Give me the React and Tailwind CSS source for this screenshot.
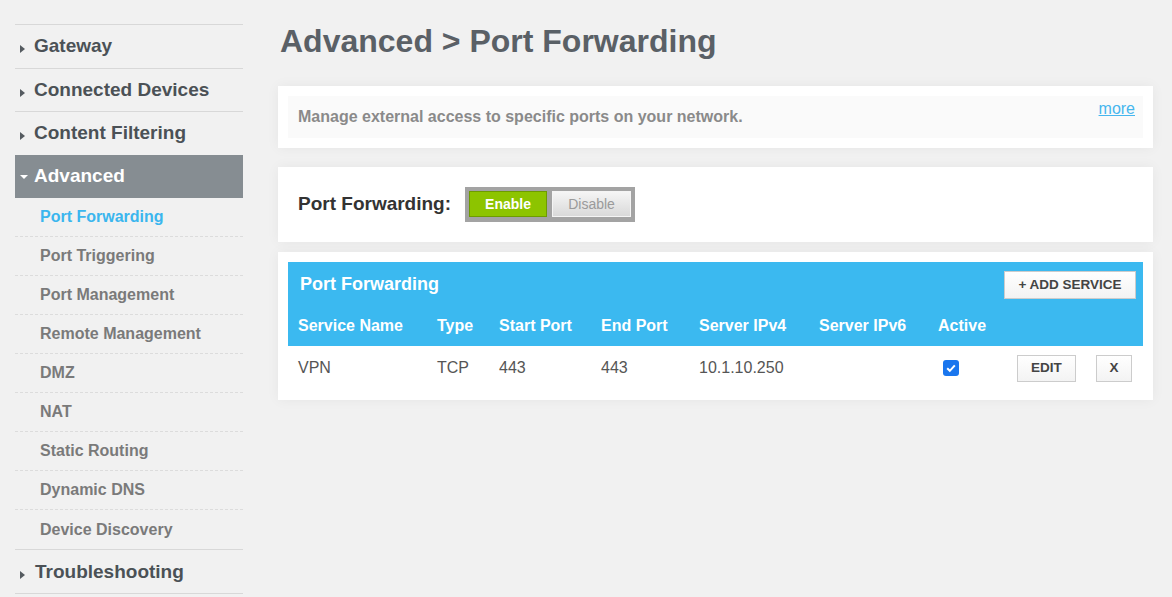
import React from "react";

const font = { fontFamily: '"Liberation Sans", Arial, sans-serif' };

function RightTri() {
  return <span className="w-0 h-0 border-y-[4px] border-y-transparent border-l-[5px] border-l-[#555b60] mt-[6px]" />;
}
function DownTri() {
  return <span className="w-0 h-0 border-x-[4px] border-x-transparent border-t-[4px] border-t-white mt-[2px]" />;
}

const topItems = ["Gateway", "Connected Devices", "Content Filtering"];
const subItems = [
  "Port Forwarding",
  "Port Triggering",
  "Port Management",
  "Remote Management",
  "DMZ",
  "NAT",
  "Static Routing",
  "Dynamic DNS",
  "Device Discovery",
];

function Sidebar() {
  return (
    <div className="w-[228px] shrink-0 mt-[24px] ml-[15px]">
      {topItems.map((t) => (
        <div key={t} className="h-[43.5px] border-t border-[#d8d8d8] flex items-center pl-[5px] gap-[9px]">
          <RightTri />
          <span className="text-[19px] font-bold text-[#4b5156]">{t}</span>
        </div>
      ))}
      <div className="h-[43px] bg-[#868d92] flex items-center pl-[5px] gap-[6px]">
        <DownTri />
        <span className="text-[19px] font-bold text-white">Advanced</span>
      </div>
      {subItems.map((s, i) => (
        <div
          key={s}
          className={
            "h-[39.1px] flex items-center pl-[25px] " +
            (i < subItems.length - 1 ? "border-b border-dashed border-[#dcdcdc]" : "")
          }
        >
          <span className={"text-[16px] font-bold " + (i === 0 ? "text-[#3bb6ee]" : "text-[#7a7a7a]")}>{s}</span>
        </div>
      ))}
      <div className="h-[45px] border-y border-[#d8d8d8] flex items-center pl-[5px] gap-[10px]">
        <RightTri />
        <span className="text-[19px] font-bold text-[#4b5156]">Troubleshooting</span>
      </div>
    </div>
  );
}

const cols = [
  { label: "Service Name", w: "w-[139px]" },
  { label: "Type", w: "w-[62px]" },
  { label: "Start Port", w: "w-[102px]" },
  { label: "End Port", w: "w-[98px]" },
  { label: "Server IPv4", w: "w-[120px]" },
  { label: "Server IPv6", w: "w-[119px]" },
  { label: "Active", w: "w-[80px]" },
];

const row = ["VPN", "TCP", "443", "443", "10.1.10.250", ""];

function SmallBtn({ children, className }) {
  return (
    <button
      className={
        "h-[27px] border border-[#cccccc] bg-gradient-to-b from-white to-[#f3f3f3] text-[13.5px] font-bold text-[#444] flex items-center justify-center " +
        className
      }
      style={font}
    >
      {children}
    </button>
  );
}

function Main() {
  return (
    <div className="ml-[35px] w-[875px] shrink-0">
      <h1 className="mt-[23px] text-[32px] leading-[37px] font-bold text-[#5a6066] pl-[2px]">
        Advanced &gt; Port Forwarding
      </h1>

      <div className="mt-[26px] bg-white p-[10px] shadow-[0_0_12px_rgba(0,0,0,0.05)]">
        <div className="bg-[#fafafa] h-[42px] flex justify-between pl-[10px] pr-[8px]">
          <span className="self-center text-[16px] font-bold text-[#8a8a8a]">
            Manage external access to specific ports on your network.
          </span>
          <a className="mt-[4px] text-[16px] leading-[17px] text-[#46b6ee] underline self-start">more</a>
        </div>
      </div>

      <div className="mt-[19px] bg-white h-[75px] flex items-center pl-[20px] shadow-[0_0_12px_rgba(0,0,0,0.05)]">
        <span className="text-[19px] font-bold text-[#333]">Port Forwarding:</span>
        <div className="ml-[14px] bg-[#a3a3a3] p-[4px] pb-[5px] flex gap-[5px]">
          <button
            className="w-[78px] h-[26px] bg-[#8dc400] border border-[#6e9c00] text-white text-[14px] font-bold"
            style={font}
          >
            Enable
          </button>
          <button
            className="w-[79px] h-[26px] bg-gradient-to-b from-[#f5f5f5] to-[#d9d9d9] border border-[#f4f4f4] text-[#9a9a9a] text-[14px]"
            style={font}
          >
            Disable
          </button>
        </div>
      </div>

      <div className="mt-[10px] bg-white p-[10px] shadow-[0_0_12px_rgba(0,0,0,0.05)]">
        <div className="bg-[#3bb9f0]">
          <div className="h-[44px] flex items-center justify-between pl-[12px] pr-[7px]">
            <span className="text-[18px] font-bold text-white">Port Forwarding</span>
            <SmallBtn className="w-[132px] h-[28px] mt-[2px]">+ ADD SERVICE</SmallBtn>
          </div>
          <div className="h-[40px] flex items-center">
            {cols.map((c) => (
              <div key={c.label} className={c.w + " pl-[10px] text-[16px] font-bold text-white"}>
                {c.label}
              </div>
            ))}
          </div>
        </div>
        <div className="h-[44px] flex items-center">
          {row.map((v, i) => (
            <div key={i} className={cols[i].w + " pl-[10px] text-[16px] text-[#555]"}>
              {v}
            </div>
          ))}
          <div className={cols[6].w + " pl-[15px] flex items-center"}>
            <span className="w-[16px] h-[16px] rounded-[3px] bg-[#1a76ee] flex items-center justify-center">
              <svg width="12" height="12" viewBox="0 0 12 12">
                <path d="M2.2 6.3 L4.8 8.8 L9.8 3.3" fill="none" stroke="white" strokeWidth="2" />
              </svg>
            </span>
          </div>
          <div className="flex-1 flex justify-end items-center gap-[20px] pr-[11px]">
            <SmallBtn className="w-[59px]">EDIT</SmallBtn>
            <SmallBtn className="w-[36px]">X</SmallBtn>
          </div>
        </div>
      </div>
    </div>
  );
}

export default function App() {
  return (
    <div className="w-[1172px] h-[597px] bg-[#f1f1f1] flex overflow-hidden" style={font}>
      <Sidebar />
      <Main />
    </div>
  );
}
